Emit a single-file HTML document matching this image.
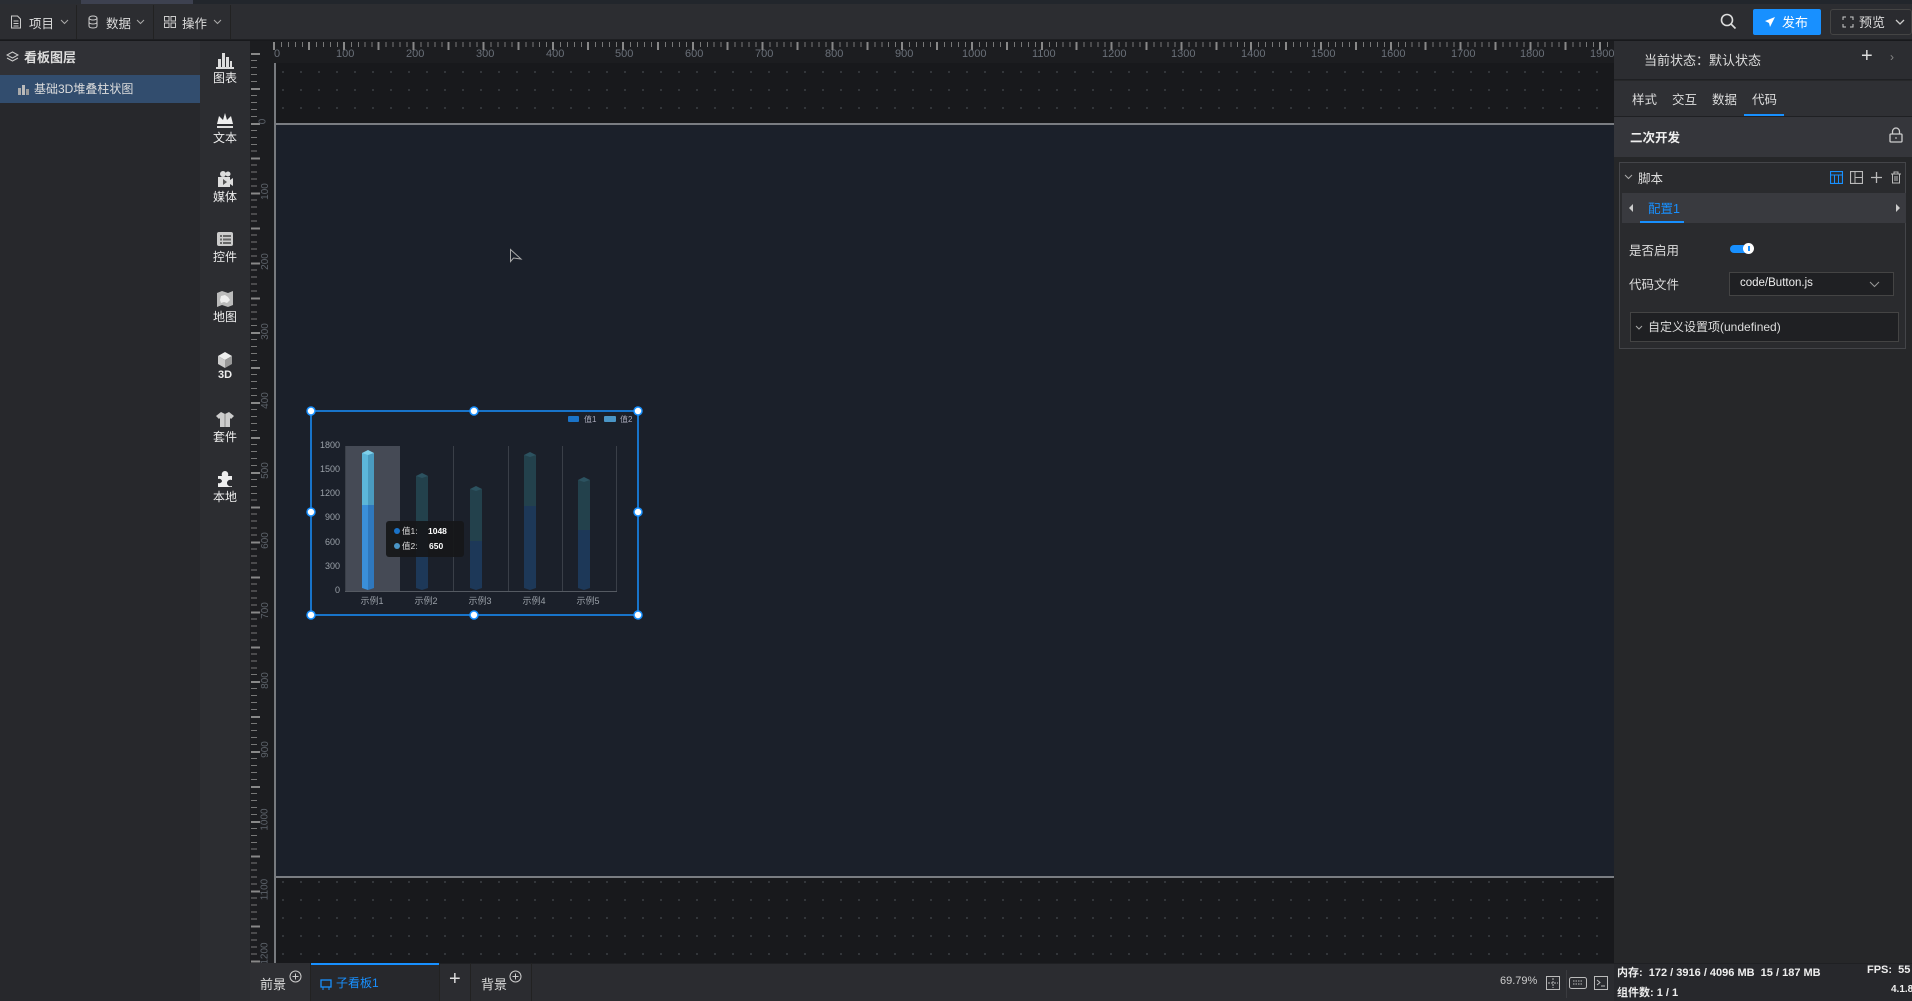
<!DOCTYPE html>
<html><head><meta charset="utf-8">
<style>
*{box-sizing:border-box;margin:0;padding:0}
body{width:1912px;height:1001px;overflow:hidden;background:#18191c;font-family:"Liberation Sans","Noto Sans CJK SC",sans-serif;color:#d8d8d8;font-size:12px;position:relative}
.a{position:absolute}
.t{white-space:nowrap;margin-top:-2px}
</style></head><body>
<!-- top strip -->
<div class="a" style="left:0;top:0;width:1912px;height:4px;background:#22262c"></div>
<div class="a" style="left:0;top:0;width:81px;height:4px;background:#2a2d33"></div>
<div class="a" style="left:81px;top:0;width:112px;height:4px;background:#3d4150"></div>
<!-- top bar -->
<div class="a" style="left:0;top:4px;width:1912px;height:36px;background:#2c2d31;border-bottom:1px solid #1e1f22"></div>
<div class="a" style="left:76px;top:5px;width:1px;height:34px;background:#222"></div>
<div class="a" style="left:153px;top:5px;width:1px;height:34px;background:#222"></div>
<div class="a" style="left:230px;top:5px;width:1px;height:34px;background:#222"></div>
<svg class="a" style="left:10px;top:15px" width="12" height="14" viewBox="0 0 12 14"><path d="M1.5 1h6l3 3v9h-9z M3.5 6h5M3.5 8.5h5M3.5 11h5" fill="none" stroke="#ccc" stroke-width="1"/></svg>
<div class="a t" style="left:29px;top:15px;font-size:12.5px;color:#ddd">项目</div>
<svg class="a" style="left:60px;top:19px" width="9" height="6"><path d="M1 1l3.5 3.5L8 1" fill="none" stroke="#aaa"/></svg>
<svg class="a" style="left:88px;top:15px" width="10" height="14" viewBox="0 0 10 14"><ellipse cx="5" cy="3" rx="4" ry="2" fill="none" stroke="#ccc"/><path d="M1 3v8c0 2.6 8 2.6 8 0V3M1 7c0 2.6 8 2.6 8 0" fill="none" stroke="#ccc"/></svg>
<div class="a t" style="left:106px;top:15px;font-size:12.5px;color:#ddd">数据</div>
<svg class="a" style="left:136px;top:19px" width="9" height="6"><path d="M1 1l3.5 3.5L8 1" fill="none" stroke="#aaa"/></svg>
<svg class="a" style="left:164px;top:16px" width="12" height="12"><rect x=".5" y=".5" width="4.5" height="4.5" fill="none" stroke="#ccc"/><rect x="7" y=".5" width="4.5" height="4.5" fill="none" stroke="#ccc"/><rect x=".5" y="7" width="4.5" height="4.5" fill="none" stroke="#ccc"/><rect x="7" y="7" width="4.5" height="4.5" fill="none" stroke="#ccc"/></svg>
<div class="a t" style="left:182px;top:15px;font-size:12.5px;color:#ddd">操作</div>
<svg class="a" style="left:213px;top:19px" width="9" height="6"><path d="M1 1l3.5 3.5L8 1" fill="none" stroke="#aaa"/></svg>
<!-- top right -->
<svg class="a" style="left:1720px;top:13px" width="17" height="17"><circle cx="7" cy="7" r="5.5" fill="none" stroke="#ddd" stroke-width="1.6"/><path d="M11 11l4.5 4.5" stroke="#ddd" stroke-width="1.6"/></svg>
<div class="a" style="left:1753px;top:9px;width:68px;height:26px;background:#1890ff;border-radius:2px"></div>
<svg class="a" style="left:1764px;top:16px" width="12" height="12"><path d="M11 1L1 5l4 2 1 4z" fill="#fff"/></svg>
<div class="a t" style="left:1782px;top:14px;font-size:13px;color:#fff">发布</div>
<div class="a" style="left:1830px;top:9px;width:82px;height:26px;border:1px solid #444;border-radius:3px;background:#2a2b2f"></div>
<svg class="a" style="left:1842px;top:16px" width="12" height="12"><path d="M1 4V1h3M8 1h3v3M11 8v3H8M4 11H1V8" fill="none" stroke="#ccc"/></svg>
<div class="a t" style="left:1859px;top:14px;font-size:13px;color:#ddd">预览</div>
<svg class="a" style="left:1895px;top:19px" width="10" height="6"><path d="M1 1l4 4 4-4" fill="none" stroke="#ccc" stroke-width="1.3"/></svg>

<!-- left layers panel -->
<div class="a" style="left:0;top:41px;width:200px;height:960px;background:#27282c"></div>
<div class="a" style="left:0;top:41px;width:200px;height:34px;background:#303136"></div>
<svg class="a" style="left:6px;top:51px" width="13" height="12"><path d="M6.5 1L12 4 6.5 7 1 4z M1 7l5.5 3 5.5-3" fill="none" stroke="#ccc"/></svg>
<div class="a t" style="left:24px;top:49px;font-size:13px;color:#ddd;font-weight:bold">看板图层</div>
<div class="a" style="left:0;top:75px;width:200px;height:28px;background:#324d6e"></div>
<svg class="a" style="left:18px;top:84px" width="11" height="11"><rect x="0" y="4" width="3" height="7" fill="#aaa"/><rect x="4" y="1" width="3" height="10" fill="#bbb"/><rect x="8" y="5" width="3" height="6" fill="#999"/></svg>
<div class="a t" style="left:34px;top:82px;font-size:12px;color:#ddd">基础3D堆叠柱状图</div>

<!-- toolbar -->
<div class="a" style="left:200px;top:41px;width:50px;height:960px;background:#2c2d31"></div>
<div class="a" style="left:207px;top:51px;width:36px;text-align:center">
<svg width="20" height="18"><rect x="3" y="8" width="3" height="8" fill="#ddd"/><rect x="7" y="2" width="3" height="14" fill="#ddd"/><rect x="11" y="6" width="3" height="10" fill="#ddd"/><rect x="15" y="10" width="2" height="6" fill="#ddd"/><rect x="1" y="16" width="18" height="2" fill="#ddd"/></svg>
<div style="font-size:12px;color:#eee;margin-top:-3px">图表</div></div>
<div class="a" style="left:207px;top:111px;width:36px;text-align:center">
<svg width="20" height="18"><path d="M2 13L4 5l4 4 2-7 2 7 4-4 2 8z" fill="#eee"/><rect x="2" y="15" width="16" height="2" fill="#ddd"/></svg>
<div style="font-size:12px;color:#eee;margin-top:-3px">文本</div></div>
<div class="a" style="left:207px;top:170px;width:36px;text-align:center">
<svg width="20" height="18"><circle cx="8" cy="4" r="3" fill="#ddd"/><circle cx="13" cy="4" r="2.5" fill="#ddd"/><rect x="3" y="7" width="12" height="10" fill="#ddd"/><path d="M15 10l3-2v8l-3-2z" fill="#ddd"/><path d="M8 9v6l4-3z" fill="#555"/></svg>
<div style="font-size:12px;color:#eee;margin-top:-3px">媒体</div></div>
<div class="a" style="left:207px;top:230px;width:36px;text-align:center">
<svg width="20" height="18"><rect x="2" y="2" width="16" height="14" rx="2" fill="#ccc"/><rect x="5" y="5" width="2" height="2" fill="#666"/><rect x="8" y="5" width="8" height="2" fill="#666"/><rect x="5" y="8.5" width="2" height="2" fill="#666"/><rect x="8" y="8.5" width="8" height="2" fill="#666"/><rect x="5" y="12" width="2" height="2" fill="#666"/><rect x="8" y="12" width="8" height="2" fill="#666"/></svg>
<div style="font-size:12px;color:#eee;margin-top:-3px">控件</div></div>
<div class="a" style="left:207px;top:290px;width:36px;text-align:center">
<svg width="20" height="18"><path d="M2 3l5-2 6 2 5-2v14l-5 2-6-2-5 2z" fill="#bbb"/><path d="M6 6l4-1 3 2 2 3-3 3-3-1-3 1-1-3z" fill="#eee"/></svg>
<div style="font-size:12px;color:#eee;margin-top:-3px">地图</div></div>
<div class="a" style="left:207px;top:351px;width:36px;text-align:center">
<svg width="20" height="18"><path d="M10 1l7 4-7 4-7-4z" fill="#eee"/><path d="M3 5l7 4v8l-7-4z" fill="#ccc"/><path d="M17 5l-7 4v8l7-4z" fill="#999"/></svg>
<div style="font-size:11px;color:#eee;margin-top:-3px;font-weight:bold">3D</div></div>
<div class="a" style="left:207px;top:410px;width:36px;text-align:center">
<svg width="20" height="18"><path d="M6 2l4 2 4-2 5 4-3 3-1-1v9H5V8L4 9 1 6z" fill="#ccc"/><path d="M10 4v13" stroke="#888"/></svg>
<div style="font-size:12px;color:#eee;margin-top:-3px">套件</div></div>
<div class="a" style="left:207px;top:470px;width:36px;text-align:center">
<svg width="20" height="18"><path d="M3 6h4c-1-3 1-5 3-5s4 2 3 5h4v4c-3-1-5 1-5 3s2 4 5 3v1H3v-4c2 1 4-1 4-2s-2-3-4-2z" fill="#eee"/></svg>
<div style="font-size:12px;color:#eee;margin-top:-3px">本地</div></div>

<!-- rulers -->
<div class="a" style="left:250px;top:41px;width:1364px;height:22px;background:#1c1d20"></div>
<div class="a" style="left:250px;top:41px;width:24px;height:922px;background:#1c1d20"></div>
<div class="a" style="left:274px;top:42px;width:1340px;height:5px;background:repeating-linear-gradient(90deg,#777 0 1px,transparent 1px 6.98px)"></div>
<div class="a" style="left:273px;top:42px;width:1340px;height:8px;background:repeating-linear-gradient(90deg,#888 0 2px,transparent 2px 34.9px)"></div>
<div class="a" style="left:251px;top:60px;width:6px;height:903px;background:repeating-linear-gradient(180deg,#777 0 1px,transparent 1px 6.98px);background-position:0 0"></div>
<div class="a" style="left:251px;top:53px;width:9px;height:910px;background:repeating-linear-gradient(180deg,#888 0 2px,transparent 2px 34.9px)"></div>
<div class="a" style="left:274px;top:48px;font-size:11px;color:#6a7079;width:1400px;white-space:nowrap">
<span class="a" style="left:0">0</span><span class="a" style="left:62px">100</span><span class="a" style="left:132px">200</span><span class="a" style="left:202px">300</span><span class="a" style="left:272px">400</span><span class="a" style="left:341px">500</span><span class="a" style="left:411px">600</span><span class="a" style="left:481px">700</span><span class="a" style="left:551px">800</span><span class="a" style="left:621px">900</span><span class="a" style="left:688px">1000</span><span class="a" style="left:758px">1100</span><span class="a" style="left:828px">1200</span><span class="a" style="left:897px">1300</span><span class="a" style="left:967px">1400</span><span class="a" style="left:1037px">1500</span><span class="a" style="left:1107px">1600</span><span class="a" style="left:1177px">1700</span><span class="a" style="left:1246px">1800</span><span class="a" style="left:1316px">1900</span>
</div>
<div class="a" style="left:266px;top:0;font-size:10px;color:#5d636b">
<span class="a t" style="top:118px;left:-6px;transform:rotate(-90deg)">0</span>
<span class="a t" style="top:188px;left:-9px;transform:rotate(-90deg)">100</span>
<span class="a t" style="top:258px;left:-9px;transform:rotate(-90deg)">200</span>
<span class="a t" style="top:328px;left:-9px;transform:rotate(-90deg)">300</span>
<span class="a t" style="top:397px;left:-9px;transform:rotate(-90deg)">400</span>
<span class="a t" style="top:467px;left:-9px;transform:rotate(-90deg)">500</span>
<span class="a t" style="top:537px;left:-9px;transform:rotate(-90deg)">600</span>
<span class="a t" style="top:607px;left:-9px;transform:rotate(-90deg)">700</span>
<span class="a t" style="top:677px;left:-9px;transform:rotate(-90deg)">800</span>
<span class="a t" style="top:746px;left:-9px;transform:rotate(-90deg)">900</span>
<span class="a t" style="top:816px;left:-12px;transform:rotate(-90deg)">1000</span>
<span class="a t" style="top:886px;left:-12px;transform:rotate(-90deg)">1100</span>
<span class="a t" style="top:950px;left:-12px;transform:rotate(-90deg)">1200</span>
</div>

<!-- canvas dotted -->
<div class="a" style="left:274px;top:63px;width:1340px;height:900px;background-image:radial-gradient(circle,#3a3d42 0.9px,transparent 1.1px);background-size:18px 18px;background-position:0px 0px"></div>
<!-- board -->
<div class="a" style="left:274px;top:123px;width:1340px;height:755px;background:#1b202a;border-top:2px solid #7a7d82;border-bottom:2px solid #7a7d82"></div>
<div class="a" style="left:274px;top:63px;width:2px;height:900px;background:#777a7e"></div>
<!-- cursor -->
<svg class="a" style="left:509px;top:248px" width="15" height="15"><path d="M1.5 1.5v12l3-3.5 7.5 1z" fill="#1b202a" stroke="#aaa" stroke-width="1"/></svg>

<!-- chart -->
<svg class="a" style="left:300px;top:400px" width="350" height="225" viewBox="300 400 350 225" font-family="Liberation Sans, Noto Sans CJK SC, sans-serif">
<rect x="345" y="446" width="55" height="145" fill="#454a55"/>
<g stroke="#3a3f48" stroke-width="1"><line x1="345.5" y1="446" x2="345.5" y2="591"/><line x1="453.5" y1="446" x2="453.5" y2="591"/><line x1="508.5" y1="446" x2="508.5" y2="591"/><line x1="562.5" y1="446" x2="562.5" y2="591"/><line x1="616.5" y1="446" x2="616.5" y2="591"/></g>
<line x1="345" y1="591.5" x2="617" y2="591.5" stroke="#555a62"/>
<g font-size="9" fill="#9aa0a8" text-anchor="end"><text x="340" y="448">1800</text><text x="340" y="472">1500</text><text x="340" y="496">1200</text><text x="340" y="520">900</text><text x="340" y="545">600</text><text x="340" y="569">300</text><text x="340" y="593">0</text></g>
<g font-size="9" fill="#9aa0a8" text-anchor="middle"><text x="372" y="604">示例1</text><text x="426" y="604">示例2</text><text x="480" y="604">示例3</text><text x="534" y="604">示例4</text><text x="588" y="604">示例5</text></g>
<path d="M362 505h6v85l-6-2z" fill="#3a8fd9"/><path d="M368 505h6v83l-6 2z" fill="#2f78bd"/>
<path d="M362 453h6v52h-6z" fill="#5cb6d9"/><path d="M368 453h6v52h-6z" fill="#4a9bbf"/>
<path d="M362 453l6-3 6 3-6 2z" fill="#7fd0ea"/>
<g>
<path d="M416 530h12v58l-6 2-6-2z" fill="#1d3858"/><path d="M416 476h12v54h-12z" fill="#23414c"/><path d="M416 476l6-3 6 3-6 2z" fill="#2c5260"/>
<path d="M470 541h12v47l-6 2-6-2z" fill="#1d3858"/><path d="M470 489h12v52h-12z" fill="#23414c"/><path d="M470 489l6-3 6 3-6 2z" fill="#2c5260"/>
<path d="M524 506h12v82l-6 2-6-2z" fill="#1d3858"/><path d="M524 455h12v51h-12z" fill="#23414c"/><path d="M524 455l6-3 6 3-6 2z" fill="#2c5260"/>
<path d="M578 530h12v58l-6 2-6-2z" fill="#1d3858"/><path d="M578 480h12v50h-12z" fill="#23414c"/><path d="M578 480l6-3 6 3-6 2z" fill="#2c5260"/>
</g>
<rect x="568" y="416" width="11" height="6" rx="1" fill="#1a73c8"/><text x="584" y="422" font-size="8" fill="#aab">值1</text>
<rect x="604" y="416" width="12" height="6" rx="1" fill="#4a95c6"/><text x="620" y="422" font-size="8" fill="#aab">值2</text>
<rect x="386" y="521" width="78" height="36" rx="3" fill="#161719" fill-opacity=".92"/>
<circle cx="397" cy="531" r="3" fill="#1a73c8"/><text x="402" y="534" font-size="8.5" fill="#ddd">值1:</text><text x="428" y="534" font-size="8.5" fill="#fff" font-weight="bold">1048</text>
<circle cx="397" cy="546" r="3" fill="#4a95c6"/><text x="402" y="549" font-size="8.5" fill="#ddd">值2:</text><text x="429" y="549" font-size="8.5" fill="#fff" font-weight="bold">650</text>
<rect x="311" y="411" width="327" height="204" fill="none" stroke="#1890ff" stroke-width="1.5"/>
<g fill="#fff" stroke="#1890ff" stroke-width="1.5"><circle cx="311" cy="411" r="4"/><circle cx="474" cy="411" r="4"/><circle cx="638" cy="411" r="4"/><circle cx="311" cy="512" r="4"/><circle cx="638" cy="512" r="4"/><circle cx="311" cy="615" r="4"/><circle cx="474" cy="615" r="4"/><circle cx="638" cy="615" r="4"/></g>
</svg>

<!-- bottom bar -->
<div class="a" style="left:250px;top:963px;width:1364px;height:38px;background:#2b2c30;border-top:1px solid #1f2023"></div>
<div class="a" style="left:250px;top:963px;width:61px;height:38px;background:#2e2f33;border-right:1px solid #222"></div>
<div class="a t" style="left:260px;top:976px;font-size:13px;color:#ddd">前景</div>
<svg class="a" style="left:289px;top:970px" width="13" height="13"><circle cx="6.5" cy="6.5" r="5.5" fill="none" stroke="#ccc"/><path d="M6.5 3.5v6M3.5 6.5h6" stroke="#ccc"/></svg>
<div class="a" style="left:311px;top:963px;width:128px;height:38px;background:#27282c;border-top:2px solid #1890ff"></div>
<svg class="a" style="left:320px;top:979px" width="12" height="12"><rect x="1" y="1" width="10" height="7" fill="none" stroke="#1890ff" stroke-width="1.3"/><path d="M3 8v3M9 8v3" stroke="#1890ff"/></svg>
<div class="a t" style="left:336px;top:976px;font-size:12px;color:#1890ff">子看板1</div>
<div class="a" style="left:439px;top:963px;width:1px;height:38px;background:#222"></div>
<div class="a t" style="left:449px;top:970px;font-size:20px;color:#ddd">+</div>
<div class="a" style="left:470px;top:963px;width:1px;height:38px;background:#222"></div>
<div class="a t" style="left:481px;top:976px;font-size:13px;color:#ddd">背景</div>
<svg class="a" style="left:509px;top:970px" width="13" height="13"><circle cx="6.5" cy="6.5" r="5.5" fill="none" stroke="#ccc"/><path d="M6.5 3.5v6M3.5 6.5h6" stroke="#ccc"/></svg>
<div class="a" style="left:531px;top:963px;width:1px;height:38px;background:#222"></div>
<div class="a t" style="left:1500px;top:977px;font-size:11px;color:#ccc">69.79%</div>
<svg class="a" style="left:1546px;top:976px" width="14" height="14"><rect x=".5" y=".5" width="13" height="13" fill="none" stroke="#bbb"/><path d="M7 2v10M2 7h10" stroke="#bbb" stroke-dasharray="2 1"/></svg>
<div class="a" style="left:1566px;top:970px;width:1px;height:28px;background:#3a3b3f"></div>
<svg class="a" style="left:1569px;top:977px" width="18" height="12"><rect x=".5" y=".5" width="17" height="11" rx="2" fill="none" stroke="#bbb"/><path d="M4 4h10M4 7h10" stroke="#bbb" stroke-dasharray="1.5 1"/></svg>
<svg class="a" style="left:1594px;top:976px" width="14" height="14"><rect x=".5" y=".5" width="13" height="13" fill="none" stroke="#bbb"/><path d="M3 4l3 2.5L3 9M7 10h4" fill="none" stroke="#bbb"/></svg>

<!-- right panel -->
<div class="a" style="left:1614px;top:41px;width:298px;height:960px;background:#262729"></div>
<div class="a" style="left:1614px;top:41px;width:298px;height:39px;background:#2c2d31;border-bottom:1px solid #1f2023"></div>
<div class="a t" style="left:1644px;top:52px;font-size:13px;color:#ddd">当前状态：默认状态</div>
<div class="a t" style="left:1861px;top:47px;font-size:20px;color:#ddd">+</div>
<div class="a t" style="left:1890px;top:52px;font-size:12px;color:#888">›</div>
<div class="a" style="left:1614px;top:81px;width:298px;height:36px;background:#2f3034;border-bottom:1px solid #1f2023"></div>
<div class="a t" style="left:1632px;top:91px;font-size:12.5px;color:#ddd">样式</div>
<div class="a t" style="left:1672px;top:91px;font-size:12.5px;color:#ddd">交互</div>
<div class="a t" style="left:1712px;top:91px;font-size:12.5px;color:#ddd">数据</div>
<div class="a t" style="left:1752px;top:91px;font-size:12.5px;color:#ddd">代码</div>
<div class="a" style="left:1744px;top:114px;width:40px;height:2px;background:#1890ff"></div>
<div class="a" style="left:1614px;top:117px;width:298px;height:40px;background:#35363b"></div>
<div class="a t" style="left:1630px;top:129px;font-size:12.5px;color:#eee;font-weight:bold">二次开发</div>
<svg class="a" style="left:1889px;top:127px" width="14" height="16"><path d="M3.5 7V4.5a3.5 3.5 0 017 0V7" fill="none" stroke="#ccc" stroke-width="1.3"/><rect x="1" y="7" width="12" height="8" rx="1" fill="none" stroke="#ccc" stroke-width="1.3"/><path d="M7 10v2" stroke="#ccc"/></svg>
<div class="a" style="left:1619px;top:162px;width:287px;height:187px;border:1px solid #444549;background:#2a2b2e"></div>
<svg class="a" style="left:1624px;top:174px" width="9" height="6"><path d="M1 1l3.5 3.5L8 1" fill="none" stroke="#aaa"/></svg>
<div class="a t" style="left:1638px;top:170px;font-size:12.5px;color:#ddd">脚本</div>
<svg class="a" style="left:1830px;top:171px" width="13" height="13"><rect x=".5" y=".5" width="12" height="12" fill="none" stroke="#1890ff" stroke-width="1.2"/><path d="M1 4h11M4.5 4v8M8.5 4v8" stroke="#1890ff"/></svg>
<svg class="a" style="left:1850px;top:171px" width="13" height="13"><rect x=".5" y=".5" width="12" height="12" fill="none" stroke="#bbb" stroke-width="1.2"/><path d="M5 1v11M5 6.5h7" stroke="#bbb"/></svg>
<svg class="a" style="left:1870px;top:171px" width="13" height="13"><path d="M6.5 1v11M1 6.5h11" stroke="#bbb" stroke-width="1.3"/></svg>
<svg class="a" style="left:1890px;top:171px" width="12" height="13"><path d="M1 3h10M4 3V1h4v2M2.5 3v9h7V3M5 5v5M7 5v5" fill="none" stroke="#bbb"/></svg>
<div class="a" style="left:1622px;top:193px;width:284px;height:30px;background:#393a3f"></div>
<svg class="a" style="left:1629px;top:204px" width="5" height="8"><path d="M4 0v8L0 4z" fill="#ccc"/></svg>
<svg class="a" style="left:1895px;top:204px" width="5" height="8"><path d="M1 0v8l4-4z" fill="#ccc"/></svg>
<div class="a t" style="left:1648px;top:200px;font-size:12.5px;color:#1890ff">配置1</div>
<div class="a" style="left:1640px;top:221px;width:44px;height:2px;background:#1890ff"></div>
<div class="a t" style="left:1629px;top:242px;font-size:12.5px;color:#ddd">是否启用</div>
<div class="a" style="left:1730px;top:245px;width:22px;height:8px;border-radius:4px;background:#1890ff"></div>
<div class="a" style="left:1743px;top:243px;width:11px;height:11px;border-radius:50%;background:#fff"></div>
<div class="a" style="left:1748px;top:246px;width:1.5px;height:5px;background:#1890ff"></div>
<div class="a t" style="left:1629px;top:276px;font-size:12.5px;color:#ddd">代码文件</div>
<div class="a" style="left:1729px;top:272px;width:165px;height:24px;background:#1f2023;border:1px solid #444"></div>
<div class="a t" style="left:1740px;top:279px;font-size:11.5px;color:#eee">code/Button.js</div>
<svg class="a" style="left:1869px;top:281px" width="11" height="7"><path d="M1 1l4.5 4.5L10 1" fill="none" stroke="#999"/></svg>
<div class="a" style="left:1630px;top:312px;width:269px;height:30px;background:#1f2023;border:1px solid #444"></div>
<svg class="a" style="left:1635px;top:325px" width="8" height="5"><path d="M1 1l3 3 3-3" fill="none" stroke="#aaa"/></svg>
<div class="a t" style="left:1648px;top:320px;font-size:12px;color:#ddd">自定义设置项(undefined)</div>
<!-- status -->
<div class="a" style="left:1614px;top:963px;width:298px;height:38px;background:#27282c;border-top:1px solid #1f2023"></div>
<div class="a t" style="left:1617px;top:966px;font-size:11px;color:#eee;font-weight:bold">内存:&nbsp; 172 / 3916 / 4096 MB&nbsp; 15 / 187 MB</div>
<div class="a t" style="left:1867px;top:966px;font-size:11px;color:#eee;font-weight:bold">FPS:&nbsp; 55</div>
<div class="a t" style="left:1617px;top:986px;font-size:11px;color:#eee;font-weight:bold">组件数: 1 / 1</div>
<div class="a t" style="left:1891px;top:986px;font-size:10px;color:#eee;font-weight:bold">4.1.8</div>
</body></html>
